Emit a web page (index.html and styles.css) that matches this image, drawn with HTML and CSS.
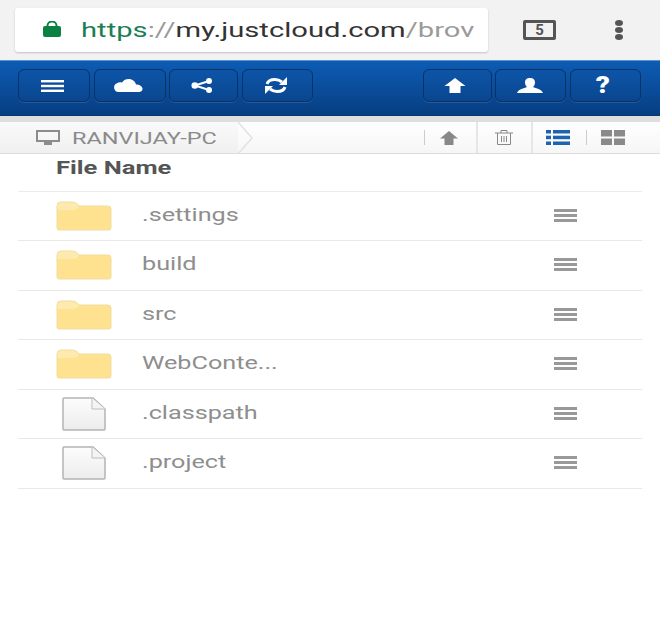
FILE: index.html
```html
<!DOCTYPE html>
<html lang="en">
<head>
    <meta charset="UTF-8">
    <meta name="viewport" content="width=device-width, initial-scale=1.0">
    <title>JustCloud</title>
    <link rel="stylesheet" href="styles.css">
</head>
<body>
    <div class="chrome">
        <div class="url-box">
            <svg class="lock" width="20" height="16" viewBox="0 0 20 16"><path d="M5.500 6V4.500a4.500 4 0 0 1 9 0V6" fill="none" stroke="#0b8043" stroke-width="2"/><rect x="1" y="5" width="18" height="11" rx="2" fill="#0b8043"/></svg>
            <div class="url"><span class="url-https">https</span><span class="url-dim">://</span>my.justcloud.com<span class="url-dim">/brov</span></div>
        </div>
        <div class="tab-count">5</div>
        <div class="dots"><span></span><span></span><span></span></div>
    </div>

    <div class="toolbar">
        <div class="btn btn-a">
            <svg width="23" height="12" viewBox="0 0 23 12" fill="#fff"><rect width="23" height="2.400"/><rect y="4.800" width="23" height="2.400"/><rect y="9.600" width="23" height="2.400"/></svg>
        </div>
        <div class="btn btn-a">
            <svg width="30" height="13" viewBox="0 0 30 13" fill="#fff"><path d="M5.500 13a4.500 4.500 0 0 1-1.500-8.700C5.500 3 7.500 3 9 3.500 10.500 1 13 0 15.500 0c4 0 7 2.500 7.500 5.500 3 0 6 1.500 6.500 4 .3 2-1.500 3.500-3.500 3.500z"/></svg>
        </div>
        <div class="btn btn-b">
            <svg width="22" height="15" viewBox="0 0 22 15"><path d="M18 3L4 7.500 18 12" fill="none" stroke="#fff" stroke-width="2"/><g fill="#fff"><circle cx="18" cy="3" r="3"/><circle cx="3.800" cy="7.500" r="3.300"/><circle cx="18" cy="12" r="3"/></g></svg>
        </div>
        <div class="btn btn-c">
            <svg width="24" height="17" viewBox="0 0 24 17"><path d="M3 7C4 3.500 7.500 2.500 11 2.500c3 0 5 1 7 2.500M21 10c-1 3.500-4.500 4.500-8 4.500-3 0-5-1-7-2.500" fill="none" stroke="#fff" stroke-width="3"/><path d="M23 0v8h-8zM1 17V9h8z" fill="#fff"/></svg>
        </div>
        <div class="toolbar-gap"></div>
        <div class="btn btn-d">
            <svg width="22" height="15" viewBox="0 0 22 15" fill="#fff"><path d="M11 0l10.500 8h-5V15h-11V8H.500z"/></svg>
        </div>
        <div class="btn btn-e">
            <svg width="28" height="15" viewBox="0 0 28 15" fill="#fff"><path d="M14 0c3.500 0 5 2 5 4.500 0 2-1 3.500-2 4.500 3 1.500 8.500 2 10 6H1c1.500-4 7-4.500 10-6-1-1-2-2.500-2-4.500C9 2 10.500 0 14 0z"/></svg>
        </div>
        <div class="btn btn-f"><span class="help">?</span></div>
    </div>
    <div class="strip"></div>

    <div class="crumbs">
        <div class="crumb">
            <svg width="24" height="15" viewBox="0 0 24 15"><rect x="1" y="1" width="22" height="10" fill="none" stroke="#8c8c8c" stroke-width="2"/><rect x="8" y="12" width="8" height="3" fill="#8c8c8c"/></svg>
            <span class="crumb-text">RANVIJAY-PC</span>
        </div>
        <svg class="chevron" width="16" height="32" viewBox="0 0 16 32"><path d="M0 0l14 16L0 32" fill="none" stroke="#e2e2e2" stroke-width="1.500"/></svg>
        <div class="tools">
            <div class="tool tool-up">
                <svg width="18" height="14" viewBox="0 0 18 14" fill="#888"><path d="M9 0l9 7.500h-4.500V14h-9V7.500H0z"/></svg>
            </div>
            <div class="tool tool-trash">
                <svg width="18" height="15" viewBox="0 0 18 15" fill="none" stroke="#888"><path d="M0 3h18M6 3V.5h6V3M2.500 3v11.500h13V3M6.500 6v6M9 6v6M11.500 6v6"/></svg>
            </div>
            <div class="tool tool-list">
                <svg width="24" height="15" viewBox="0 0 24 15" fill="#1e63ae"><rect width="5" height="3.500"/><rect x="7" width="17" height="3.500"/><rect y="5.700" width="5" height="3.500"/><rect x="7" y="5.700" width="17" height="3.500"/><rect y="11.500" width="5" height="3.500"/><rect x="7" y="11.500" width="17" height="3.500"/></svg>
            </div>
            <div class="tool tool-grid">
                <svg width="24" height="15" viewBox="0 0 24 15" fill="#8a8a8a"><rect width="11" height="6.500"/><rect x="13" width="11" height="6.500"/><rect y="8.500" width="11" height="6.500"/><rect x="13" y="8.500" width="11" height="6.500"/></svg>
            </div>
        </div>
    </div>

    <div class="file-table">
        <div class="file-head"><span class="file-head-text">File Name</span></div>
        <div class="file-row">
            <div class="file-icon"><svg width="56" height="30" viewBox="0 0 56 30"><use href="#folder-shape"/></svg></div>
            <div class="file-name">.settings</div>
            <div class="row-menu"><span></span><span></span><span></span></div>
        </div>
        <div class="file-row">
            <div class="file-icon"><svg width="56" height="30" viewBox="0 0 56 30"><use href="#folder-shape"/></svg></div>
            <div class="file-name">build</div>
            <div class="row-menu"><span></span><span></span><span></span></div>
        </div>
        <div class="file-row">
            <div class="file-icon"><svg width="56" height="30" viewBox="0 0 56 30"><use href="#folder-shape"/></svg></div>
            <div class="file-name">src</div>
            <div class="row-menu"><span></span><span></span><span></span></div>
        </div>
        <div class="file-row">
            <div class="file-icon"><svg width="56" height="30" viewBox="0 0 56 30"><use href="#folder-shape"/></svg></div>
            <div class="file-name">WebConte...</div>
            <div class="row-menu"><span></span><span></span><span></span></div>
        </div>
        <div class="file-row">
            <div class="file-icon file-icon-page"><svg width="46" height="34" viewBox="0 0 46 34"><use href="#page-shape"/></svg></div>
            <div class="file-name">.classpath</div>
            <div class="row-menu"><span></span><span></span><span></span></div>
        </div>
        <div class="file-row">
            <div class="file-icon file-icon-page"><svg width="46" height="34" viewBox="0 0 46 34"><use href="#page-shape"/></svg></div>
            <div class="file-name">.project</div>
            <div class="row-menu"><span></span><span></span><span></span></div>
        </div>
    </div>

    <svg class="defs" width="0" height="0">
        <defs>
            <linearGradient id="page-fill" x1="0" y1="0" x2="0" y2="1"><stop offset="0" stop-color="#fdfdfd"/><stop offset="1" stop-color="#ececec"/></linearGradient>
            <g id="folder-shape">
                <path d="M1 7V5a4 4 0 0 1 4-4h10c4 0 6 1 8 4h29a3 3 0 0 1 3 3v19a2 2 0 0 1-2 2H3a2 2 0 0 1-2-2z" fill="#fee290" stroke="#f1dc9e"/>
                <path d="M1.500 5.500a4 4 0 0 1 4-4h9.500c4 0 6 1 8 4-1 2-3 3.500-6 3.500H1.500z" fill="#fdeaae"/>
            </g>
            <g id="page-shape">
                <path d="M2 2a1 1 0 0 1 1-1h29l12 11v20a1 1 0 0 1-1 1H3a1 1 0 0 1-1-1z" fill="url(#page-fill)" stroke="#b4b4b4" stroke-width="1.500"/>
                <path d="M31 1v11h13" fill="#f4f4f4" stroke="#bdbdbd"/>
            </g>
        </defs>
    </svg>
</body>
</html>
```

FILE: styles.css
```css
html, body {
    margin: 0;
    padding: 0;
}
body {
    width: 660px;
    height: 621px;
    overflow: hidden;
    background-color: #ffffff;
    font-family: Roboto, "Liberation Sans", sans-serif;
}
.chrome {
    height: 60px;
    background-color: #f2f2f2;
    display: flex;
    align-items: center;
}
.url-box {
    width: 473px;
    height: 44px;
    margin-left: 15px;
    background-color: #ffffff;
    border-radius: 3px;
    box-shadow: 0 1px 2px rgba(0, 0, 0, 0.2);
    display: flex;
    align-items: center;
    overflow: hidden;
}
.lock {
    margin-left: 27px;
    margin-right: 19px;
    margin-top: -2px;
    flex: none;
}
.url {
    font-size: 21px;
    color: #333333;
    white-space: nowrap;
    margin-top: -1px;
    transform: scaleX(1.39);
    transform-origin: left center;
}
.url-https { color: #1c7f54; }
.url-dim { color: #9a9a9a; }
.tab-count {
    width: 27px;
    height: 14px;
    margin-left: 35px;
    margin-top: -1px;
    border: 3px solid #555555;
    border-radius: 2px;
    font-size: 15px;
    font-weight: bold;
    line-height: 14px;
    text-align: center;
    color: #555555;
}
.dots {
    margin-left: 59px;
    display: flex;
    flex-direction: column;
    gap: 1px;
}
.dots span {
    width: 8px;
    height: 6px;
    border-radius: 50%;
    background-color: #555555;
}
.toolbar {
    height: 56px;
    box-sizing: border-box;
    padding: 8px 19.500px 0 18px;
    background: linear-gradient(#0d5cb4, #0a4a97 60%, #063d80);
    border-top: 1px solid #5c93cf;
    border-bottom: 1px solid #07386f;
    display: flex;
    align-items: flex-start;
    gap: 3.500px;
}
.toolbar-gap { flex: 1; }
.btn {
    height: 33px;
    box-sizing: border-box;
    padding-right: 4px;
    border: 1.500px solid #073367;
    border-radius: 6px;
    background: linear-gradient(#0d55a8, #0a468f);
    box-shadow: 0 1px 0 rgba(255, 255, 255, 0.12);
    display: flex;
    align-items: center;
    justify-content: center;
}
.btn-a { width: 72px; }
.btn-b { width: 69px; }
.btn-c { width: 71px; padding-right: 2px; }
.btn-d { width: 69px; }
.btn-e { width: 71px; padding-right: 2px; }
.btn-f { width: 71px; }
.help {
    font-size: 23px;
    font-weight: 900;
    color: #ffffff;
    transform: scaleX(1.2);
}
.strip {
    height: 6px;
    background-color: #dedede;
}
.crumbs {
    height: 32px;
    box-sizing: border-box;
    border-bottom: 1px solid #dcdcdc;
    background: linear-gradient(#ffffff, #f6f6f6);
    display: flex;
    align-items: flex-start;
}
.crumb {
    width: 238px;
    height: 31px;
    box-sizing: border-box;
    padding-left: 36px;
    background: linear-gradient(#fafafa, #f0f0f0);
    display: flex;
    align-items: center;
    gap: 12px;
}
.crumb-text {
    font-size: 17px;
    color: #8a8a8a;
    white-space: nowrap;
    transform: scaleX(1.38);
    transform-origin: left center;
}
.chevron {
    flex: none;
}
.tools {
    flex: 1;
    height: 31px;
    display: flex;
    align-items: center;
    padding-left: 170px;
}
.tool {
    height: 31px;
    display: flex;
    align-items: center;
    box-sizing: border-box;
}
.tool-up {
    width: 54px;
    padding-left: 16px;
    position: relative;
    border-right: 2px solid #e6e6e6;
}
.tool-up::before {
    content: "";
    position: absolute;
    left: 0;
    top: 8px;
    height: 15px;
    border-left: 1px solid #cccccc;
}
.tool-trash {
    width: 55px;
    padding-left: 17px;
    border-right: 2px solid #e6e6e6;
}
.tool-list {
    width: 54px;
    padding-left: 13px;
    position: relative;
}
.tool-list::after {
    content: "";
    position: absolute;
    right: 0;
    top: 8px;
    height: 15px;
    border-left: 1px solid #cccccc;
}
.tool-grid {
    padding-left: 14px;
}
.file-table {
    margin: 0 18px;
}
.file-head {
    height: 37.500px;
    padding-left: 38px;
    box-sizing: border-box;
    padding-top: 3px;
    border-bottom: 1px solid #ececec;
}
.file-head-text {
    display: inline-block;
    font-size: 18px;
    font-weight: bold;
    color: #555555;
    transform: scaleX(1.42);
    transform-origin: left center;
}
.file-row {
    height: 49.500px;
    box-sizing: border-box;
    border-bottom: 1px solid #e8e8e8;
    display: flex;
    align-items: center;
}
.file-icon {
    width: 123.500px;
    flex: none;
    padding-left: 38px;
    box-sizing: border-box;
    display: flex;
    align-items: center;
}
.file-icon-page {
    padding-left: 43px;
}
.file-name {
    margin-top: -3px;
    font-size: 18px;
    color: #8e8e8e;
    transform: scaleX(1.4);
    transform-origin: left center;
}
.row-menu {
    margin-left: auto;
    margin-right: 65px;
    margin-top: -1px;
    display: flex;
    flex-direction: column;
    gap: 2px;
}
.row-menu span {
    width: 23px;
    height: 3px;
    background-color: #999999;
}
.defs {
    position: absolute;
}
```
